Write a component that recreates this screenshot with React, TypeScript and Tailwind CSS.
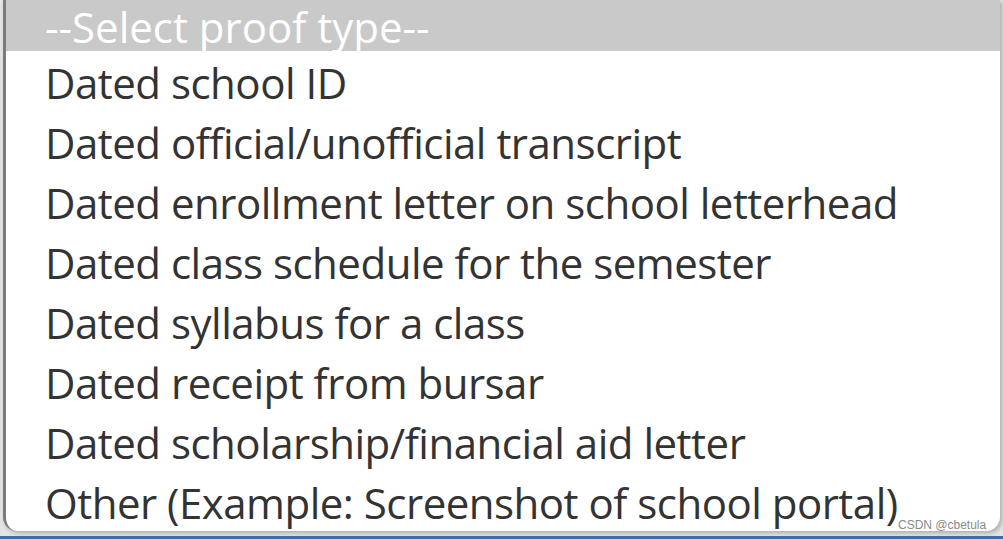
const options = [
  "Dated school ID",
  "Dated official/unofficial transcript",
  "Dated enrollment letter on school letterhead",
  "Dated class schedule for the semester",
  "Dated syllabus for a class",
  "Dated receipt from bursar",
  "Dated scholarship/financial aid letter",
  "Other (Example: Screenshot of school portal)",
];

export default function App() {
  return (
    <div className="relative flex h-[539px] w-[1003px] flex-col overflow-hidden bg-[#e4e4e4]">
      <div className="flex-1 pb-[5px] pl-[3px] pr-[3px]">
        <ul
          className="h-full overflow-hidden rounded-b-[14px] border-l-[3px] border-[#7c7c7c] bg-white text-[42px] tracking-[-0.5px] text-[#333] shadow-[2px_2px_4px_rgba(0,0,0,0.25)]"
          style={{ fontFamily: '"Open Sans", "Noto Sans", sans-serif' }}
        >
          <li className="h-[51px] whitespace-nowrap bg-[#c9c9c9] pl-[39px] pt-[3px] leading-[48px] tracking-normal text-white">
            --Select proof type--
          </li>
          {options.map((o) => (
            <li key={o} className="h-[60px] whitespace-nowrap pl-[39px] pt-[4px] leading-[56px]">
              {o}
            </li>
          ))}
        </ul>
      </div>
      <div className="h-[4px] bg-[#3b6ea6]" />
      <span
        className="absolute left-[898px] top-[516px] text-[12px] text-[#8a8a8a]"
        style={{ fontFamily: '"Liberation Sans", Arial, sans-serif' }}
      >
        CSDN @cbetula
      </span>
    </div>
  );
}
